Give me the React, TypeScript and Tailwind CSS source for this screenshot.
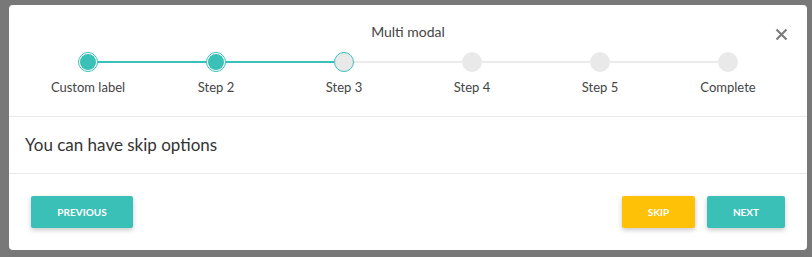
const steps = ["Custom label", "Step 2", "Step 3", "Step 4", "Step 5", "Complete"];

const Dot = ({ state }: { state: "done" | "current" | "todo" }) => {
  if (state === "done")
    return (
      <div className="w-5 h-5 rounded-full border border-[#3bc0b8] bg-white p-px">
        <div className="w-full h-full rounded-full bg-[#3bc0b8]" />
      </div>
    );
  if (state === "current")
    return <div className="w-5 h-5 rounded-full border border-[#3bc0b8] bg-[#e9e9e9]" />;
  return <div className="w-5 h-5 rounded-full bg-[#e9e9e9]" />;
};

export default function App() {
  return (
    <div className="h-[257px] bg-[#787878] pl-[9px] pt-[5px] font-['Lato',sans-serif]">
      <div className="relative w-[798px] h-[245px] bg-white rounded-[4px] flex flex-col">
        <button className="absolute top-[23px] right-[19px] text-[#7d7d7d]">
          <svg width="13" height="13" viewBox="0 0 13 13">
            <path d="M1.5 1.5 L11.5 11.5 M11.5 1.5 L1.5 11.5" stroke="currentColor" strokeWidth="2.2" />
          </svg>
        </button>

        <div className="pt-[17px] px-[15px] h-[111px]">
          <h3 className="text-center text-[14px] leading-5 text-[#444]">Multi modal</h3>
          <div className="grid grid-cols-6 mt-[10px]">
            {steps.map((s, i) => (
              <div key={s} className="relative flex flex-col items-center">
                {i < steps.length - 1 && (
                  <div
                    className={
                      "absolute top-[9px] left-[calc(50%+10px)] w-[108px] h-[2px] " +
                      (i < 2 ? "bg-[#3bc0b8]" : "bg-[#ebebeb]")
                    }
                  />
                )}
                <Dot state={i < 2 ? "done" : i === 2 ? "current" : "todo"} />
                <span className="mt-[6px] text-[13px] leading-[18px] text-[#444]">{s}</span>
              </div>
            ))}
          </div>
        </div>

        <div className="border-t border-[#e9e9e9] h-[57px] flex items-center px-4">
          <p className="text-[17px] text-[#333]">You can have skip options</p>
        </div>

        <div className="border-t border-[#e9e9e9] flex-1 flex items-start justify-between px-[22px] pt-[22px]">
          <button className="w-[102px] h-[32px] rounded-[2px] bg-[#3bc0b8] text-white text-[10px] font-bold shadow-[0_2px_5px_rgba(0,0,0,0.22)]">
            PREVIOUS
          </button>
          <div className="flex gap-3">
            <button className="w-[73px] h-[32px] rounded-[2px] bg-[#ffc107] text-white text-[10px] font-bold shadow-[0_2px_5px_rgba(0,0,0,0.22)]">
              SKIP
            </button>
            <button className="w-[78px] h-[32px] rounded-[2px] bg-[#3bc0b8] text-white text-[10px] font-bold shadow-[0_2px_5px_rgba(0,0,0,0.22)]">
              NEXT
            </button>
          </div>
        </div>
      </div>
    </div>
  );
}
